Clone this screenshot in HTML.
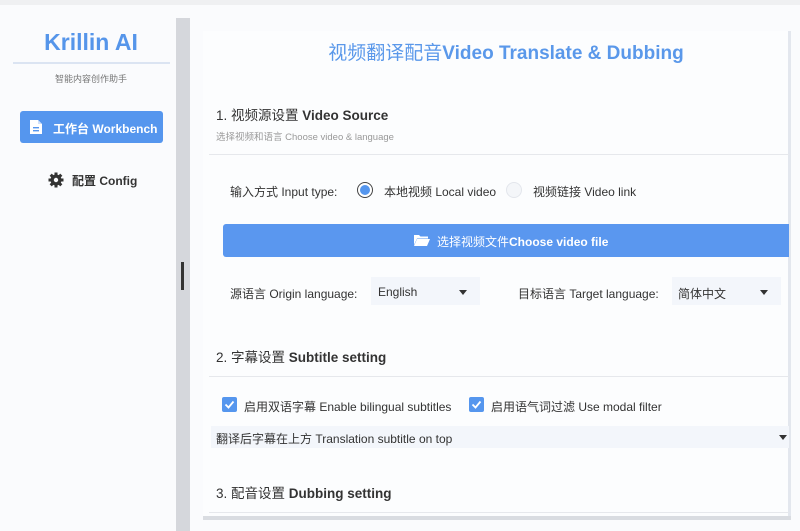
<!DOCTYPE html>
<html><head><meta charset="utf-8"><style>
*{margin:0;padding:0;box-sizing:border-box}
body{width:800px;height:531px;overflow:hidden;background:#fafbfd;font-family:"Liberation Sans","Noto Sans CJK SC",sans-serif;position:relative;color:#333}
.a{position:absolute}
.t{white-space:nowrap}
</style></head><body>
<div class="a" style="left:0;top:0;width:800px;height:5px;background:#eff0f2"></div>
<div class="a" style="left:0;top:5px;width:176px;height:526px;background:#fafbfd"></div>
<div class="a t" style="left:0;top:29px;width:182px;text-align:center;font-size:23px;font-weight:bold;color:#5595ea">Krillin AI</div>
<div class="a" style="left:13px;top:62px;width:157px;height:2px;background:#dbe4f2"></div>
<div class="a t" style="left:0;top:72px;width:182px;text-align:center;font-size:9px;color:#777">智能内容创作助手</div>
<div class="a" style="left:20px;top:111px;width:143px;height:32px;background:#5596ee;border-radius:3px"></div>
<svg class="a" style="left:29px;top:119px" width="14" height="16" viewBox="0 0 14 16"><path d="M1 1h8l4 4v10H1z" fill="#fff"/><path d="M9 1v4h4" fill="#cfe0fa"/><rect x="4" y="8" width="6" height="1.4" fill="#5596ee"/><rect x="4" y="11" width="6" height="1.4" fill="#5596ee"/></svg>
<div class="a t" style="left:53px;top:120px;font-size:12px;font-weight:bold;color:#fff">工作台 Workbench</div>
<svg class="a" style="left:48px;top:172px" width="16" height="16" viewBox="0 0 16 16"><g fill="#333"><circle cx="8" cy="8" r="5.5"/><rect x="6.5" y="0.5" width="3" height="15"/><rect x="0.5" y="6.5" width="15" height="3"/><rect x="6.5" y="0.5" width="3" height="15" transform="rotate(45 8 8)"/><rect x="6.5" y="0.5" width="3" height="15" transform="rotate(-45 8 8)"/></g><circle cx="8" cy="8" r="2.2" fill="#fafbfd"/></svg>
<div class="a t" style="left:72px;top:172px;font-size:12px;font-weight:bold;color:#333">配置 Config</div>
<div class="a" style="left:176px;top:18px;width:14px;height:513px;background:#d5d7dc"></div>
<div class="a" style="left:181px;top:262px;width:3px;height:28px;background:#333"></div>
<div class="a" style="left:203px;top:31px;width:586px;height:488px;background:#fcfdfe"></div>
<div class="a" style="left:788px;top:31px;width:3px;height:488px;background:#e3e7ee"></div>
<div class="a" style="left:203px;top:516px;width:588px;height:4px;background:#d9dce1"></div>
<div class="a t" style="left:203px;top:38px;width:606px;text-align:center;font-size:19px;color:#5a98ea;font-weight:bold"><span style="font-weight:normal">视频翻译配音</span>Video Translate &amp; Dubbing</div>
<div class="a t" style="left:216px;top:104px;font-size:13.5px;color:#333">1. 视频源设置 <b>Video Source</b></div>
<div class="a t" style="left:216px;top:129px;font-size:9.5px;color:#999">选择视频和语言 Choose video &amp; language</div>
<div class="a" style="left:209px;top:154px;width:580px;height:1px;background:#e6e8ec"></div>
<div class="a t" style="left:230px;top:183px;font-size:12px;color:#333">输入方式 Input type:</div>
<div class="a" style="left:357px;top:182px;width:16px;height:16px;border-radius:50%;border:1.5px solid #444;background:#fff"></div>
<div class="a" style="left:360px;top:185px;width:10px;height:10px;border-radius:50%;background:#5596ee"></div>
<div class="a t" style="left:384px;top:183px;font-size:12px;color:#333">本地视频 Local video</div>
<div class="a" style="left:506px;top:182px;width:16px;height:16px;border-radius:50%;border:1px solid #e3e6ec;background:#f4f6f9"></div>
<div class="a t" style="left:533px;top:183px;font-size:12px;color:#333">视频链接 Video link</div>
<div class="a" style="left:223px;top:224px;width:566px;height:33px;background:#5a97ef;border-radius:3px 0 0 3px"></div>
<svg class="a" style="left:413px;top:233px" width="17" height="14" viewBox="0 0 17 14"><path d="M1 2h5l1.5 1.5H15v2H4L1 12z" fill="#fff"/><path d="M4 6h13l-3 7H1z" fill="#fff"/></svg>
<div class="a t" style="left:437px;top:233px;font-size:12px;color:#fff">选择视频文件<b>Choose video file</b></div>
<div class="a t" style="left:230px;top:285px;font-size:12px;color:#333">源语言 Origin language:</div>
<div class="a" style="left:371px;top:277px;width:109px;height:28px;background:#f3f6fb"></div>
<div class="a t" style="left:378px;top:285px;font-size:12px;color:#333">English</div>
<div class="a" style="left:459px;top:290px;border-left:4px solid transparent;border-right:4px solid transparent;border-top:5px solid #333"></div>
<div class="a t" style="left:518px;top:285px;font-size:12px;color:#333">目标语言 Target language:</div>
<div class="a" style="left:672px;top:277px;width:109px;height:28px;background:#f3f6fb"></div>
<div class="a t" style="left:678px;top:285px;font-size:12px;color:#333">简体中文</div>
<div class="a" style="left:760px;top:290px;border-left:4px solid transparent;border-right:4px solid transparent;border-top:5px solid #333"></div>
<div class="a t" style="left:216px;top:346px;font-size:13.5px;color:#333">2. 字幕设置 <b>Subtitle setting</b></div>
<div class="a" style="left:209px;top:376px;width:580px;height:1px;background:#e6e8ec"></div>
<div class="a" style="left:222px;top:397px;width:15px;height:15px;background:#5596ee;border-radius:2px"></div>
<svg class="a" style="left:222px;top:397px" width="15" height="15"><path d="M3.5 7.5l3 3 5-6" stroke="#fff" stroke-width="1.8" fill="none"/></svg>
<div class="a t" style="left:244px;top:398px;font-size:12px;color:#333">启用双语字幕 Enable bilingual subtitles</div>
<div class="a" style="left:469px;top:397px;width:15px;height:15px;background:#5596ee;border-radius:2px"></div>
<svg class="a" style="left:469px;top:397px" width="15" height="15"><path d="M3.5 7.5l3 3 5-6" stroke="#fff" stroke-width="1.8" fill="none"/></svg>
<div class="a t" style="left:491px;top:398px;font-size:12px;color:#333">启用语气词过滤 Use modal filter</div>
<div class="a" style="left:211px;top:426px;width:578px;height:22px;background:#f3f6fb"></div>
<div class="a t" style="left:216px;top:430px;font-size:12px;color:#333">翻译后字幕在上方 Translation subtitle on top</div>
<div class="a" style="left:779px;top:435px;border-left:4px solid transparent;border-right:4px solid transparent;border-top:5px solid #333"></div>
<div class="a t" style="left:216px;top:482px;font-size:13.5px;color:#333">3. 配音设置 <b>Dubbing setting</b></div>
<div class="a" style="left:209px;top:512px;width:580px;height:1px;background:#e6e8ec"></div>
</body></html>
